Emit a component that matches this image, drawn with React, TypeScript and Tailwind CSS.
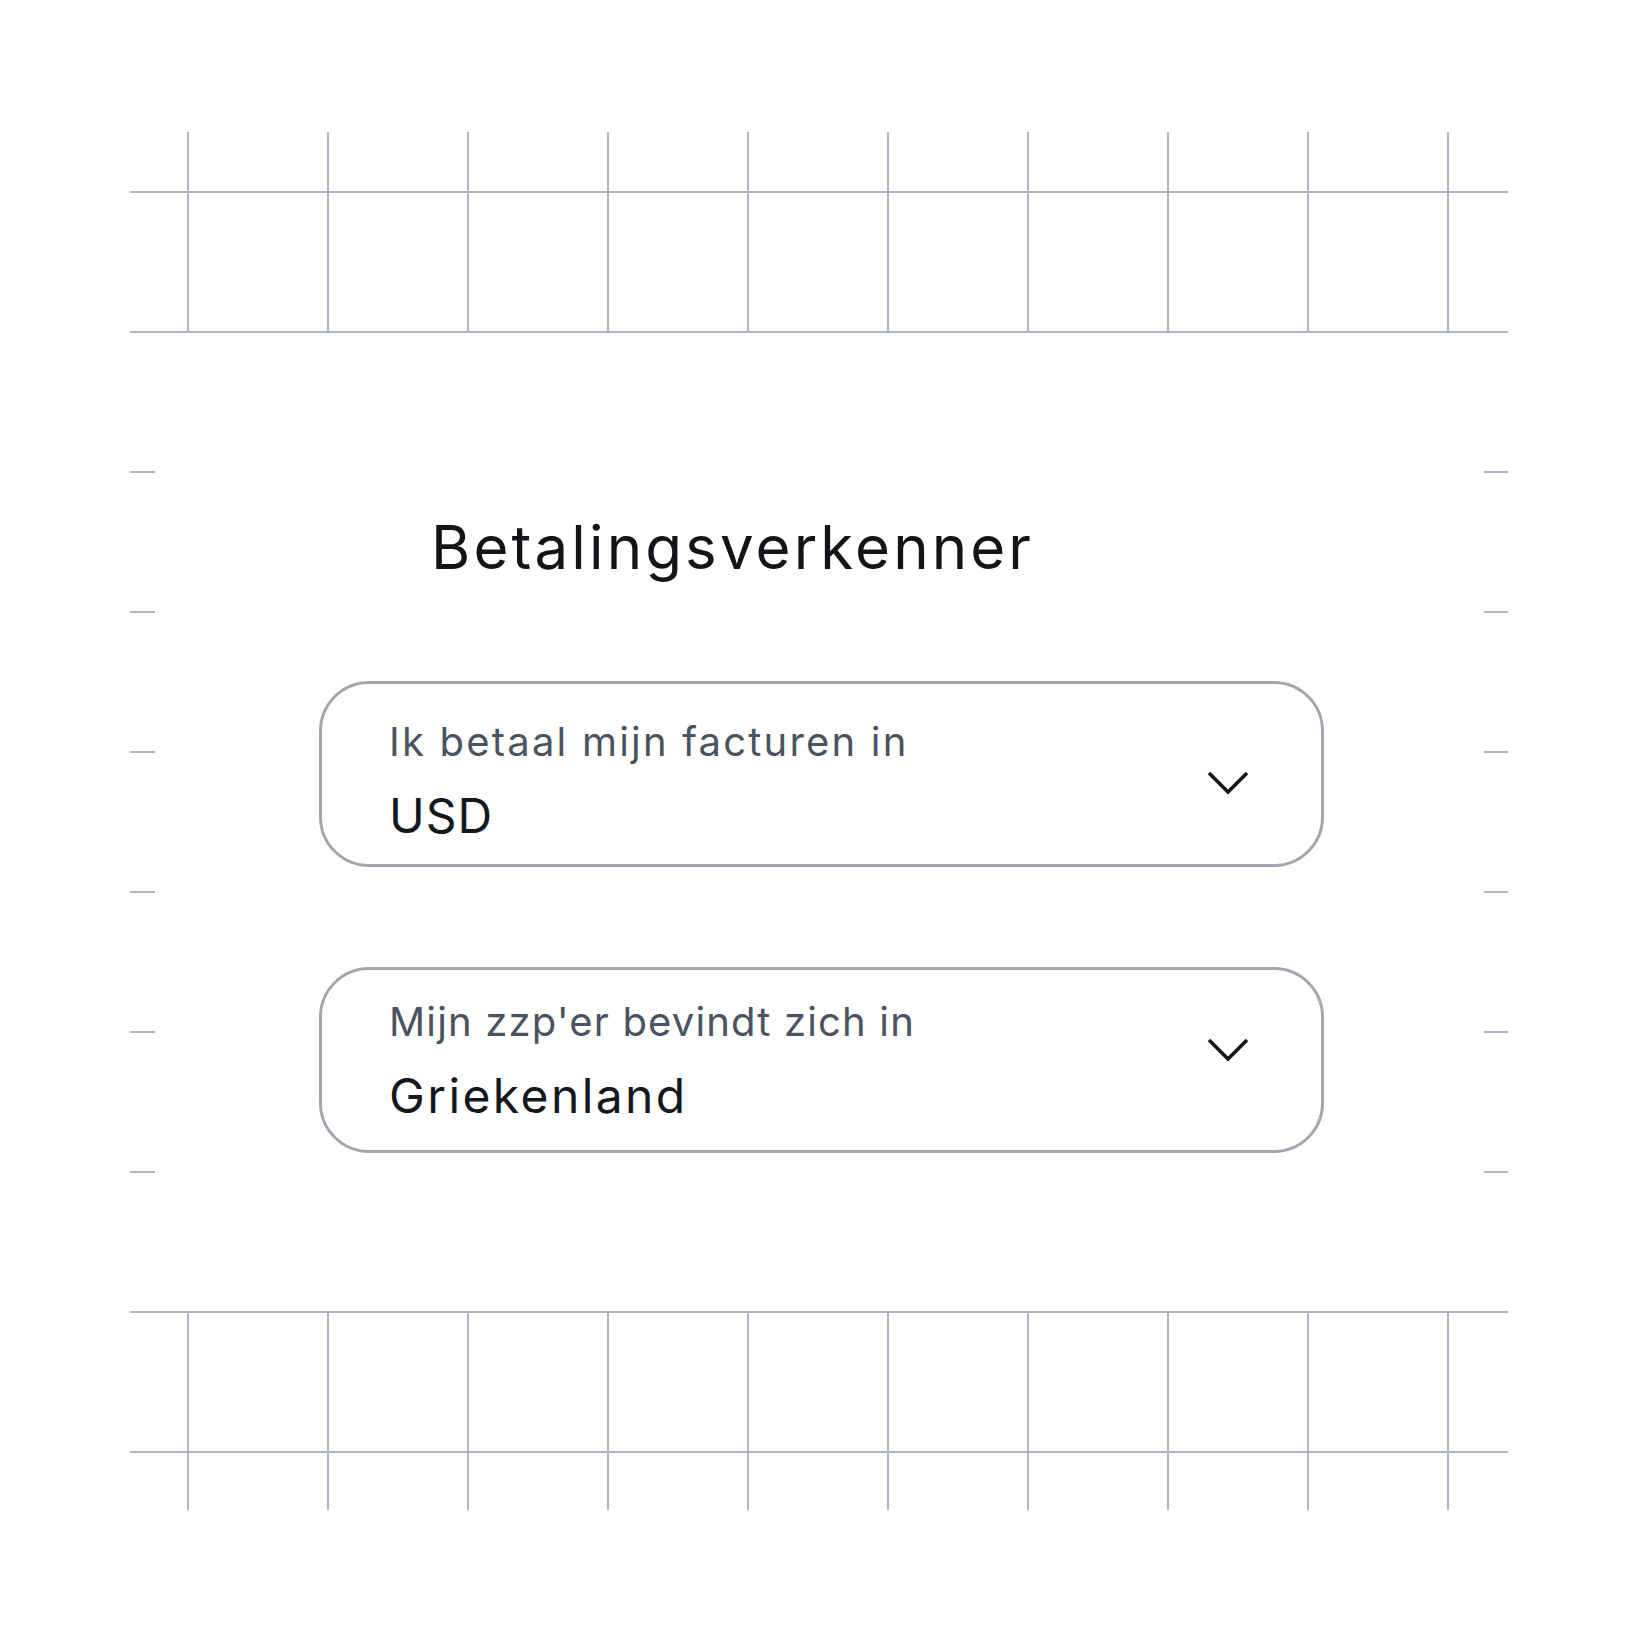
import React from "react";

const GRID_X = Array.from({ length: 10 }, (_, i) => 188 + i * 140);
const GRID_Y = Array.from({ length: 10 }, (_, i) => 192 + i * 140);

function GridBackdrop() {
  return (
    <svg
      className="absolute inset-0"
      width={1640}
      height={1640}
      viewBox="0 0 1640 1640"
      aria-hidden="true"
    >
      {GRID_X.map((x) => (
        <line key={`v${x}`} x1={x} y1={132} x2={x} y2={1510} stroke="#aeb6c3" strokeWidth={2} />
      ))}
      {GRID_Y.map((y) => (
        <line key={`h${y}`} x1={130} y1={y} x2={1508} y2={y} stroke="#aeb6c3" strokeWidth={2} />
      ))}
    </svg>
  );
}

function Chevron() {
  return (
    <svg width={42} height={24} viewBox="0 0 42 24" fill="none" aria-hidden="true">
      <polyline
        points="2,2 21,21 40,2"
        stroke="#121418"
        strokeWidth={3.5}
        strokeLinecap="butt"
        strokeLinejoin="miter"
        fill="none"
      />
    </svg>
  );
}

type SelectProps = {
  label: string;
  value: string;
  labelTracking: string;
  valueTracking: string;
  pt: string;
  pb: string;
  chevronTop: string;
};

function SelectField({ label, value, labelTracking, valueTracking, pt, pb, chevronTop }: SelectProps) {
  return (
    <div className="flex h-[186px] w-[1005px] items-start justify-between rounded-[50px] border-[3px] border-[#a2a6ad] bg-white pl-[67px] pr-[72px]">
      <div className={`flex flex-col ${pt} ${pb}`}>
        <span className={`text-[40px] leading-[48px] text-[#4b5360] ${labelTracking}`}>{label}</span>
        <span className={`mt-[22px] text-[48px] leading-[56px] text-[#14171c] ${valueTracking}`}>{value}</span>
      </div>
      <div className={chevronTop}>
        <Chevron />
      </div>
    </div>
  );
}

export default function App() {
  return (
    <div
      className="relative h-[1640px] w-[1640px] overflow-hidden bg-white"
      style={{ fontFamily: "Inter, 'Noto Sans', sans-serif" }}
    >
      <GridBackdrop />
      <div className="relative pl-[155px] pt-[333px]">
        <section className="flex h-[978px] w-[1329px] flex-col bg-white pl-[164px] pt-[178px]">
          <h1 className="ml-[112px] text-[60px] font-normal leading-[72px] tracking-[0.052em] text-[#121417]">
            Betalingsverkenner
          </h1>
          <div className="mt-[98px] flex flex-col gap-[100px]">
            <SelectField
              label="Ik betaal mijn facturen in"
              value="USD"
              labelTracking="tracking-[0.055em]"
              valueTracking="tracking-[0.02em]"
              pt="pt-[34px]"
              pb="pb-[20px]"
              chevronTop="mt-[87px]"
            />
            <SelectField
              label="Mijn zzp'er bevindt zich in"
              value="Griekenland"
              labelTracking="tracking-[0.029em]"
              valueTracking="tracking-[0.05em]"
              pt="pt-[28px]"
              pb="pb-[26px]"
              chevronTop="mt-[68px]"
            />
          </div>
        </section>
      </div>
    </div>
  );
}
